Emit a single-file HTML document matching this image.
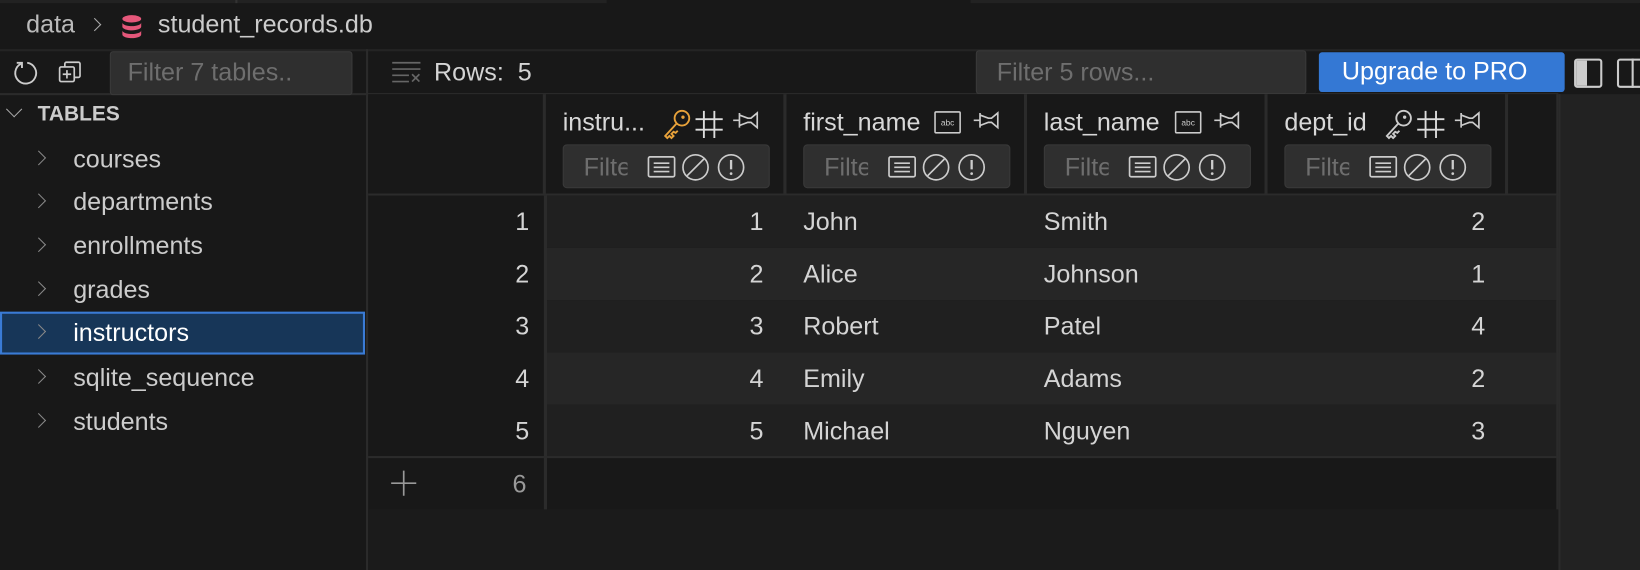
<!DOCTYPE html>
<html><head><meta charset="utf-8"><style>
*{box-sizing:border-box;margin:0;padding:0}
html,body{width:1640px;height:570px;overflow:hidden;background:#181818}
#w{position:absolute;left:0;top:0;width:1568px;height:545px;transform:scale(1.0459);transform-origin:0 0;font-family:"Liberation Sans",sans-serif;color:#cccccc;background:#181818;overflow:hidden}
.a{position:absolute}
.t{font-size:24px;white-space:nowrap}
svg{position:absolute}
.item{position:absolute;left:0;width:350px;height:42px;font-size:24px;color:#cccccc}
.item span{position:absolute;left:70px;top:7px}
.item i{position:absolute;left:32px;top:14px;width:10px;height:10px;border-right:1.5px solid #888;border-top:1.5px solid #888;transform:rotate(45deg)}
.hdr{position:absolute;top:90px;height:97px;background:#181818;border-right:3px solid #2b2b2b}
.hdr .n{position:absolute;left:16px;top:14px;font-size:24px;color:#d8d8d8;white-space:nowrap}
.row{position:absolute;left:522px;width:968px;height:50px}
.row span{position:absolute;top:12px;font-size:24px;color:#d4d4d4}
.rn{position:absolute;left:352px;width:170px;height:50px;font-size:24px;color:#d4d4d4}
.rn span{position:absolute;right:16px;top:12px}
</style></head><body><div id="w">
<div class="a" style="left:0;top:0;width:1568px;height:3px;background:#222"></div>
<div class="a" style="left:225px;top:0;width:2px;height:3px;background:#333"></div>
<div class="a" style="left:580px;top:0;width:348px;height:3px;background:#181818"></div>
<div class="a t" style="left:25px;top:10px;color:#bbb">data</div>
<div class="a" style="left:86px;top:19px;width:9px;height:9px;border-right:1.5px solid #aaa;border-top:1.5px solid #aaa;transform:rotate(45deg)"></div>
<svg style="left:115px;top:14px" width="22" height="24" viewBox="0 0 22 24"><ellipse cx="11" cy="4" rx="9" ry="3.5" fill="#e5577a"/><path d="M2 7.5c0 2 4 3.5 9 3.5s9-1.5 9-3.5v4c0 2-4 3.5-9 3.5s-9-1.5-9-3.5z" fill="#e5577a"/><path d="M2 15c0 2 4 3.5 9 3.5s9-1.5 9-3.5v4c0 2-4 3.5-9 3.5s-9-1.5-9-3.5z" fill="#e5577a"/></svg>
<div class="a t" style="left:151px;top:10px;color:#ccc">student_records.db</div>
<div class="a" style="left:0;top:47px;width:1568px;height:2px;background:#242424"></div>
<div class="a" style="left:0;top:89px;width:1490px;height:2px;background:#2b2b2b"></div>
<svg style="left:12px;top:57px" width="26" height="26" viewBox="0 0 26 26"><path d="M8 4A10 10 0 1 0 14 3" fill="none" stroke="#ccc" stroke-width="1.8"/><path d="M4 3h5v5" fill="none" stroke="#ccc" stroke-width="1.8"/></svg>
<svg style="left:55px;top:56px" width="26" height="26" viewBox="0 0 26 26"><rect x="2" y="8" width="14" height="14" rx="1.5" fill="none" stroke="#ccc" stroke-width="1.6"/><path d="M7 8V5a1.5 1.5 0 0 1 1.5-1.5H20A1.5 1.5 0 0 1 21.5 5v11.5A1.5 1.5 0 0 1 20 18h-4" fill="none" stroke="#ccc" stroke-width="1.6"/><path d="M9 11v8M5 15h8" stroke="#ccc" stroke-width="1.6"/></svg>
<div class="a" style="left:105px;top:49px;width:232px;height:42px;background:#2f2f2f;border:1px solid #3a3a3a;border-radius:3px"></div>
<div class="a t" style="left:122px;top:56px;color:#6e6e6e">Filter 7 tables..</div>
<svg style="left:374px;top:58px" width="30" height="22" viewBox="0 0 30 22"><path d="M1 2h27M1 8h27M1 14h16M1 20h16" stroke="#666" stroke-width="1.6"/><path d="M20 13l7 7M27 13l-7 7" stroke="#666" stroke-width="1.6"/></svg>
<div class="a t" style="left:415px;top:56px;color:#d4d4d4">Rows:&nbsp; 5</div>
<div class="a" style="left:933px;top:48px;width:316px;height:42px;background:#2f2f2f;border:1px solid #3a3a3a;border-radius:3px"></div>
<div class="a t" style="left:953px;top:56px;color:#6e6e6e">Filter 5 rows...</div>
<div class="a" style="left:1261px;top:50px;width:235px;height:38px;background:#3478d4;border-radius:3px"></div>
<div class="a t" style="left:1283px;top:55px;color:#fff">Upgrade to PRO</div>
<div class="a" style="left:1505px;top:56px;width:27px;height:28px;border:2px solid #ccc;border-radius:3px;background:linear-gradient(90deg,#ccc 45%,transparent 45%)"></div>
<div class="a" style="left:1546px;top:56px;width:30px;height:28px;border:2px solid #ccc;border-radius:3px"></div>
<div class="a" style="left:1560px;top:56px;width:2px;height:28px;background:#ccc"></div>
<div class="a" style="left:350px;top:47px;width:2px;height:523px;background:#2b2b2b"></div>
<div class="a" style="left:8px;top:99px;width:11px;height:11px;border-right:1.6px solid #aaa;border-bottom:1.6px solid #aaa;transform:rotate(45deg)"></div>
<div class="a" style="left:36px;top:98px;font-size:20px;font-weight:bold;color:#ccc">TABLES</div>
<div class="item" style="top:132px"><i></i><span>courses</span></div>
<div class="item" style="top:173px"><i></i><span>departments</span></div>
<div class="item" style="top:215px"><i></i><span>enrollments</span></div>
<div class="item" style="top:257px"><i></i><span>grades</span></div>
<div class="item" style="top:298px;height:41px;background:#173658;border:2px solid #3a7bd5;width:349px"><i style="left:30px;top:12px"></i><span style="left:68px;top:5px;color:#fff">instructors</span></div>
<div class="item" style="top:341px"><i></i><span>sqlite_sequence</span></div>
<div class="item" style="top:383px"><i></i><span>students</span></div>
<div class="a" style="left:352px;top:487px;width:1138px;height:60px;background:#1b1b1b"></div>
<div class="a" style="left:1490px;top:90px;width:80px;height:460px;background:#222;border-left:2px solid #2b2b2b"></div>
<div class="a" style="left:352px;top:90px;width:170px;height:97px;background:#181818;border-right:3px solid #2b2b2b"></div>
<div class="hdr" style="left:522px;width:230px"><div class="n">instru...</div>
<svg style="left:110px;top:14px" width="30" height="30" viewBox="0 0 30 30"><circle cx="20" cy="9" r="7" fill="none" stroke="#e8a23a" stroke-width="1.8"/><circle cx="21" cy="8" r="1.6" fill="#e8a23a"/><path d="M15 14L4 26l2 2 2-2 2 2 2-2-2-2 2-2 2 1 2-2" fill="none" stroke="#e8a23a" stroke-width="1.8"/></svg>
<svg style="left:142px;top:15px" width="28" height="28" viewBox="0 0 28 28"><path d="M9 1v26M19 1v26M1 9h26M1 19h26" stroke="#ddd" stroke-width="1.8"/></svg>
</div>
<div class="hdr" style="left:752px;width:230px"><div class="n">first_name</div>
<svg style="left:141px;top:16px" width="26" height="22" viewBox="0 0 26 22"><rect x="1" y="1" width="24" height="20" rx="1" fill="none" stroke="#ccc" stroke-width="1.5"/><text x="13" y="14" font-size="8" fill="#ccc" text-anchor="middle" font-family="Liberation Sans">abc</text></svg>
</div>
<div class="hdr" style="left:982px;width:230px"><div class="n">last_name</div>
<svg style="left:141px;top:16px" width="26" height="22" viewBox="0 0 26 22"><rect x="1" y="1" width="24" height="20" rx="1" fill="none" stroke="#ccc" stroke-width="1.5"/><text x="13" y="14" font-size="8" fill="#ccc" text-anchor="middle" font-family="Liberation Sans">abc</text></svg>
</div>
<div class="hdr" style="left:1212px;width:230px"><div class="n">dept_id</div>
<svg style="left:110px;top:14px" width="30" height="30" viewBox="0 0 30 30"><circle cx="20" cy="9" r="7" fill="none" stroke="#ccc" stroke-width="1.8"/><circle cx="21" cy="8" r="1.6" fill="#ccc"/><path d="M15 14L4 26l2 2 2-2 2 2 2-2-2-2 2-2 2 1 2-2" fill="none" stroke="#ccc" stroke-width="1.8"/></svg>
<svg style="left:142px;top:15px" width="28" height="28" viewBox="0 0 28 28"><path d="M9 1v26M19 1v26M1 9h26M1 19h26" stroke="#ddd" stroke-width="1.8"/></svg>
</div>
<div class="a" style="left:1442px;top:90px;width:48px;height:97px;background:#181818"></div>
<div class="a" style="left:352px;top:185px;width:1138px;height:2px;background:#2b2b2b"></div>
<script>
var L=[522,752,982,1212];var h='';
L.forEach(function(x){
h+='<svg style="left:'+(x+178)+'px;top:105px" width="26" height="20" viewBox="0 0 26 20"><path d="M1 10h6M7 3v14M7 5l8 3h3l6-5v14l-6-5h-3l-8 3" fill="none" stroke="#ccc" stroke-width="1.6"/></svg>';
h+='<div class="a" style="left:'+(x+16)+'px;top:138px;width:198px;height:42px;background:#2f2f2f;border:1px solid #3a3a3a;border-radius:4px"><span style="position:absolute;left:19px;top:8px;font-size:24px;color:#6e6e6e;width:42px;overflow:hidden;white-space:nowrap">Filter</span>'+
'<svg style="left:78px;top:8px" width="110" height="26" viewBox="0 0 110 26"><rect x="3" y="3" width="25" height="19" rx="1.5" fill="none" stroke="#ccc" stroke-width="1.6"/><path d="M8 9h15M8 13h15M8 17h15" stroke="#ccc" stroke-width="1.6"/><circle cx="48" cy="13" r="12" fill="none" stroke="#ccc" stroke-width="1.6"/><path d="M40 21L56 5" stroke="#ccc" stroke-width="1.6"/><circle cx="82" cy="13" r="12" fill="none" stroke="#ccc" stroke-width="1.6"/><path d="M82 6v9" stroke="#ccc" stroke-width="2.2"/><circle cx="82" cy="19" r="1.3" fill="#ccc"/></svg></div>';
});
var d=[['1','John','Smith','2'],['2','Alice','Johnson','1'],['3','Robert','Patel','4'],['4','Emily','Adams','2'],['5','Michael','Nguyen','3']];
d.forEach(function(r,i){var y=187+i*50;
h+='<div class="rn" style="top:'+y+'px"><span>'+(i+1)+'</span></div>';
h+='<div class="row" style="top:'+y+'px;background:'+(i%2?'#262626':'#202020')+'"><span style="right:'+(968-208)+'px">'+r[0]+'</span><span style="left:246px">'+r[1]+'</span><span style="left:476px">'+r[2]+'</span><span style="right:'+(968-898)+'px">'+r[3]+'</span></div>';});
document.write(h);
</script>
<div class="a" style="left:352px;top:436px;width:1138px;height:2px;background:#2b2b2b"></div>
<div class="a" style="left:520px;top:187px;width:3px;height:300px;background:#2b2b2b"></div>
<div class="a" style="left:1488px;top:90px;width:2px;height:397px;background:#2b2b2b"></div>
<svg style="left:373px;top:449px" width="26" height="26" viewBox="0 0 26 26"><path d="M13 1v24M1 13h24" stroke="#999" stroke-width="1.6"/></svg>
<div class="a t" style="left:490px;top:450px;color:#999">6</div>
</div></body></html>
